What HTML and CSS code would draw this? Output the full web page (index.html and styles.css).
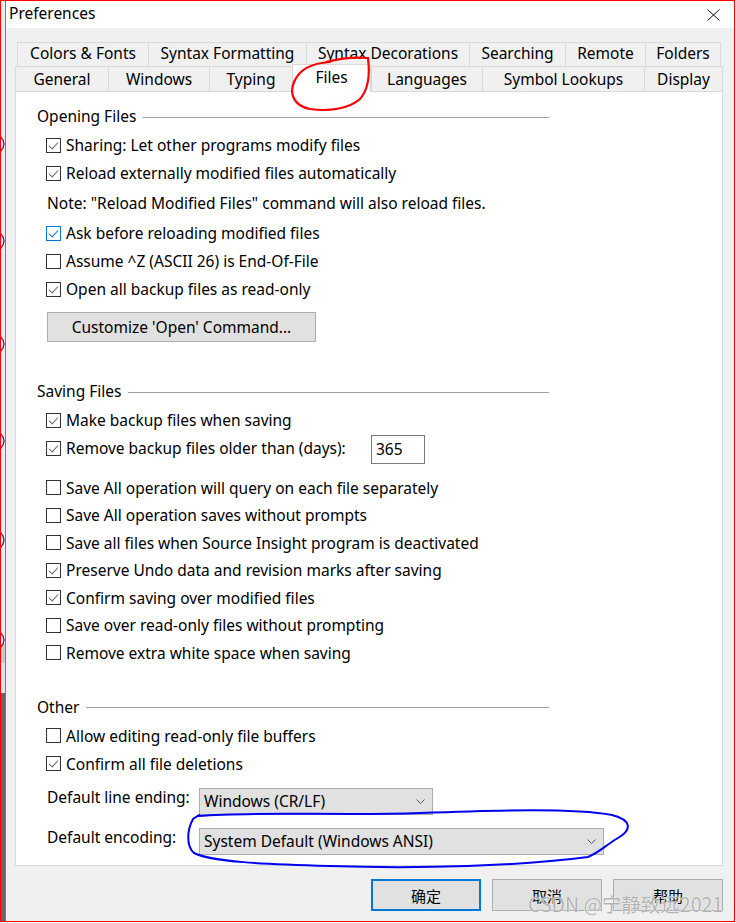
FILE: index.html
```html
<!DOCTYPE html>
<html>
<head>
<meta charset="utf-8">
<title>Preferences</title>
<link rel="stylesheet" href="styles.css">
</head>
<body>

<div class="shot">
  <div class="desk">
    <svg width="4" height="920" viewBox="0 0 4 920">
      <g fill="none" stroke="#7d1f80" stroke-width="1.4">
        <path d="M-1 135 Q7 143 -1 151"/>
        <path d="M-1 232 Q7 240 -1 248"/>
        <path d="M-1 335 Q7 343 -1 351"/>
        <path d="M-1 432 Q7 440 -1 448"/>
        <path d="M-1 531 Q7 539 -1 547"/>
        <path d="M-1 631 Q7 639 -1 647"/>
      </g>
    </svg>
  </div>

  <div class="dialog">
    <div class="titlebar">
      <span>Preferences</span>
      <svg class="close" width="13" height="12" viewBox="0 0 13 12">
        <path d="M0.5 0.5 L12.5 11.5 M12.5 0.5 L0.5 11.5" stroke="#111" stroke-width="1" fill="none"/>
      </svg>
    </div>

    <div class="client">
      <div class="tabrow row1">
        <div class="tab">Colors &amp; Fonts</div>
        <div class="tab">Syntax Formatting</div>
        <div class="tab">Syntax Decorations</div>
        <div class="tab">Searching</div>
        <div class="tab">Remote</div>
        <div class="tab">Folders</div>
      </div>
      <div class="tabrow row2">
        <div class="tab">General</div>
        <div class="tab">Windows</div>
        <div class="tab">Typing</div>
        <div class="tab sel">Files</div>
        <div class="tab">Languages</div>
        <div class="tab">Symbol Lookups</div>
        <div class="tab">Display</div>
      </div>

      <div class="panel">
        <div class="legend">Opening Files</div>
        <div class="cb first"><span class="box on"></span>Sharing: Let other programs modify files</div>
        <div class="cb"><span class="box on"></span>Reload externally modified files automatically</div>
        <div class="note">Note: "Reload Modified Files" command will also reload files.</div>
        <div class="cb"><span class="box on focus"></span>Ask before reloading modified files</div>
        <div class="cb"><span class="box"></span>Assume ^Z (ASCII 26) is End-Of-File</div>
        <div class="cb"><span class="box on"></span>Open all backup files as read-only</div>
        <button class="push">Customize 'Open' Command...</button>

        <div class="legend saving">Saving Files</div>
        <div class="cb first"><span class="box on"></span>Make backup files when saving</div>
        <div class="cb"><span class="box on"></span><span class="wide">Remove backup files older than (days):</span><span class="num">365</span></div>
        <div class="cb tight gap"><span class="box"></span>Save All operation will query on each file separately</div>
        <div class="cb tight"><span class="box"></span>Save All operation saves without prompts</div>
        <div class="cb tight"><span class="box"></span>Save all files when Source Insight program is deactivated</div>
        <div class="cb tight"><span class="box on"></span>Preserve Undo data and revision marks after saving</div>
        <div class="cb tight"><span class="box on"></span>Confirm saving over modified files</div>
        <div class="cb tight"><span class="box"></span>Save over read-only files without prompting</div>
        <div class="cb tight"><span class="box"></span>Remove extra white space when saving</div>

        <div class="legend other">Other</div>
        <div class="cb first"><span class="box"></span>Allow editing read-only file buffers</div>
        <div class="cb"><span class="box on"></span>Confirm all file deletions</div>

        <div class="field ending">
          <span class="label">Default line ending:</span>
          <div class="select short">Windows (CR/LF)
            <svg width="9" height="5" viewBox="0 0 9 5"><path d="M0.5 0.5 L4.5 4.5 L8.5 0.5" fill="none" stroke="#555"/></svg>
          </div>
        </div>
        <div class="field encoding">
          <span class="label">Default encoding:</span>
          <div class="select long">System Default (Windows ANSI)
            <svg width="9" height="5" viewBox="0 0 9 5"><path d="M0.5 0.5 L4.5 4.5 L8.5 0.5" fill="none" stroke="#555"/></svg>
          </div>
        </div>
      </div>

      <div class="buttons">
        <button class="push dlg default">确定</button>
        <button class="push dlg">取消</button>
        <button class="push dlg">帮助</button>
      </div>
    </div>
  </div>

  <!-- hand drawn marks over the screenshot -->
  <svg class="marks" width="736" height="923" viewBox="0 0 736 923">
    <path d="M326 62 C342 58, 356 57, 368 58 C370 74, 368 90, 360 99 C350 108, 330 112, 310 109 C294 106, 289 94, 294 82 C299 70, 312 63, 330 62"
          fill="none" stroke="#f00" stroke-width="2.2" stroke-linecap="round"/>
    <path d="M198 816 C260 811, 340 816, 420 813 C500 810, 575 808, 612 815 C632 820, 632 830, 618 838 C606 845, 600 852, 588 857 C520 866, 420 869, 330 866 C262 864, 212 862, 194 853 C186 846, 187 830, 193 819 L199 815"
          fill="none" stroke="#0000f0" stroke-width="2" stroke-linecap="round"/>
  </svg>
  <div class="watermark">CSDN @宁静致远2021</div>
</div>

</body>
</html>
```

FILE: styles.css
```css
body {margin:0; background:#fff; color:#000; font:15.5px "Noto Sans", "Noto Sans CJK SC", sans-serif;}

.shot {position:relative; width:735px; height:922px; box-sizing:border-box; border:1px solid #f00; display:flex; overflow:hidden;}
.desk {width:4px; flex:none; background:linear-gradient(#ececec 0 643px, #c9c9c9 643px 662px, #e4e4e4 662px 692px, #646464 692px);}
.desk svg {display:block;}

.dialog {flex:1; display:flex; flex-direction:column; background:#f0f0f0; border-left:1px solid #7c7c7c;}
.titlebar {height:27px; flex:none; background:#fff; display:flex; align-items:center; justify-content:space-between; padding:0 14px 0 3px;}
.titlebar span {line-height:25px; padding-bottom:2px;}
.close {display:block; margin-top:1px;}

.client {flex:1; padding:14px 11px 0 9px;}

.tabrow {display:grid; grid-template-rows:25px; height:25px;}
.row1 {grid-template-columns:131px 158px 163px 96px 80px 76px; grid-template-rows:24px; height:24px; margin:0 2px;}
.row1 .tab {padding-bottom:3px;}
.row2 {grid-template-columns:93px 101px 83px 79px 111px 162px 79px;}
.row2 .tab {padding-bottom:1px;}
.tab {box-sizing:border-box; display:flex; align-items:center; justify-content:center; border:1px solid #d9d9d9; border-bottom:none; border-right:none; background:#f0f0f0; white-space:nowrap;}
.tab:last-child {border-right:1px solid #d9d9d9;}
.row2 .tab.sel {position:relative; z-index:1; height:28px; margin-top:-2px; background:#fff; border-right:1px solid #d9d9d9; padding-bottom:3px;}

.panel {height:775px; box-sizing:border-box; border:1px solid #d9d9d9; background:#fff; padding:14px 0 0 21px;}

.legend {display:flex; align-items:center; gap:7px; width:512px; height:20px; white-space:nowrap;}
.legend::after {content:""; flex:1; height:1px; margin-top:2px; background:#a0a0a0;}
.legend.saving {margin-top:39px;}
.legend.other {margin-top:30px;}

.cb {display:flex; align-items:center; gap:5px; height:28px; padding-left:9px; white-space:nowrap;}
.cb.first {margin-top:5px;}
.cb.tight {height:27.5px;}
.cb.gap {margin-top:12px;}
.box {position:relative; flex:none; width:15px; height:15px; box-sizing:border-box; border:1px solid #333; background:#fff;}
.box.on::after {content:""; position:absolute; left:4px; top:1px; width:4px; height:8px; border-right:1px solid #666; border-bottom:1px solid #666; transform:rotate(42deg);}
.box.focus {border-color:#0078d7;}
.box.focus::after {border-color:#0078d7;}
.wide {width:300px;}
.num {box-sizing:border-box; width:54px; height:29px; border:1px solid #7a7a7a; padding:0 4px; line-height:27px; margin-top:3px;}

.note {height:32px; line-height:32px; padding-left:10px; white-space:nowrap;}

.push {font:inherit; color:#000; background:#e1e1e1; border:1px solid #adadad; padding:0; margin:0;}
.panel .push {display:block; width:269px; height:30px; margin:9px 0 0 10px;}

.field {display:flex; align-items:flex-start; padding-left:10px;}
.field.ending {margin-top:10px;}
.field.encoding {margin-top:13px;}
.label {width:152px; line-height:19px; white-space:nowrap;}
.select {box-sizing:border-box; height:27px; display:flex; align-items:center; justify-content:space-between; padding:0 7px 0 4px; background:#e1e1e1; border:1px solid #adadad;}
.select.short {width:234px;}
.select.long {width:405px;}
.select svg {display:block;}

.buttons {display:flex; justify-content:flex-end; gap:11px; margin-top:13px;}
.dlg {width:110px; height:32px; font-family:"Noto Sans CJK SC", sans-serif; font-size:15px;}
.dlg.default {border:2px solid #0078d7;}

.marks {position:absolute; left:-1px; top:-1px; pointer-events:none; z-index:5;}
.watermark {position:absolute; left:527px; top:888px; z-index:6; font:19.5px "Noto Sans CJK SC", sans-serif; color:rgba(110,110,110,0.55); text-shadow:0 0 1px #fff, 0 0 1px #fff; white-space:nowrap;}
```
